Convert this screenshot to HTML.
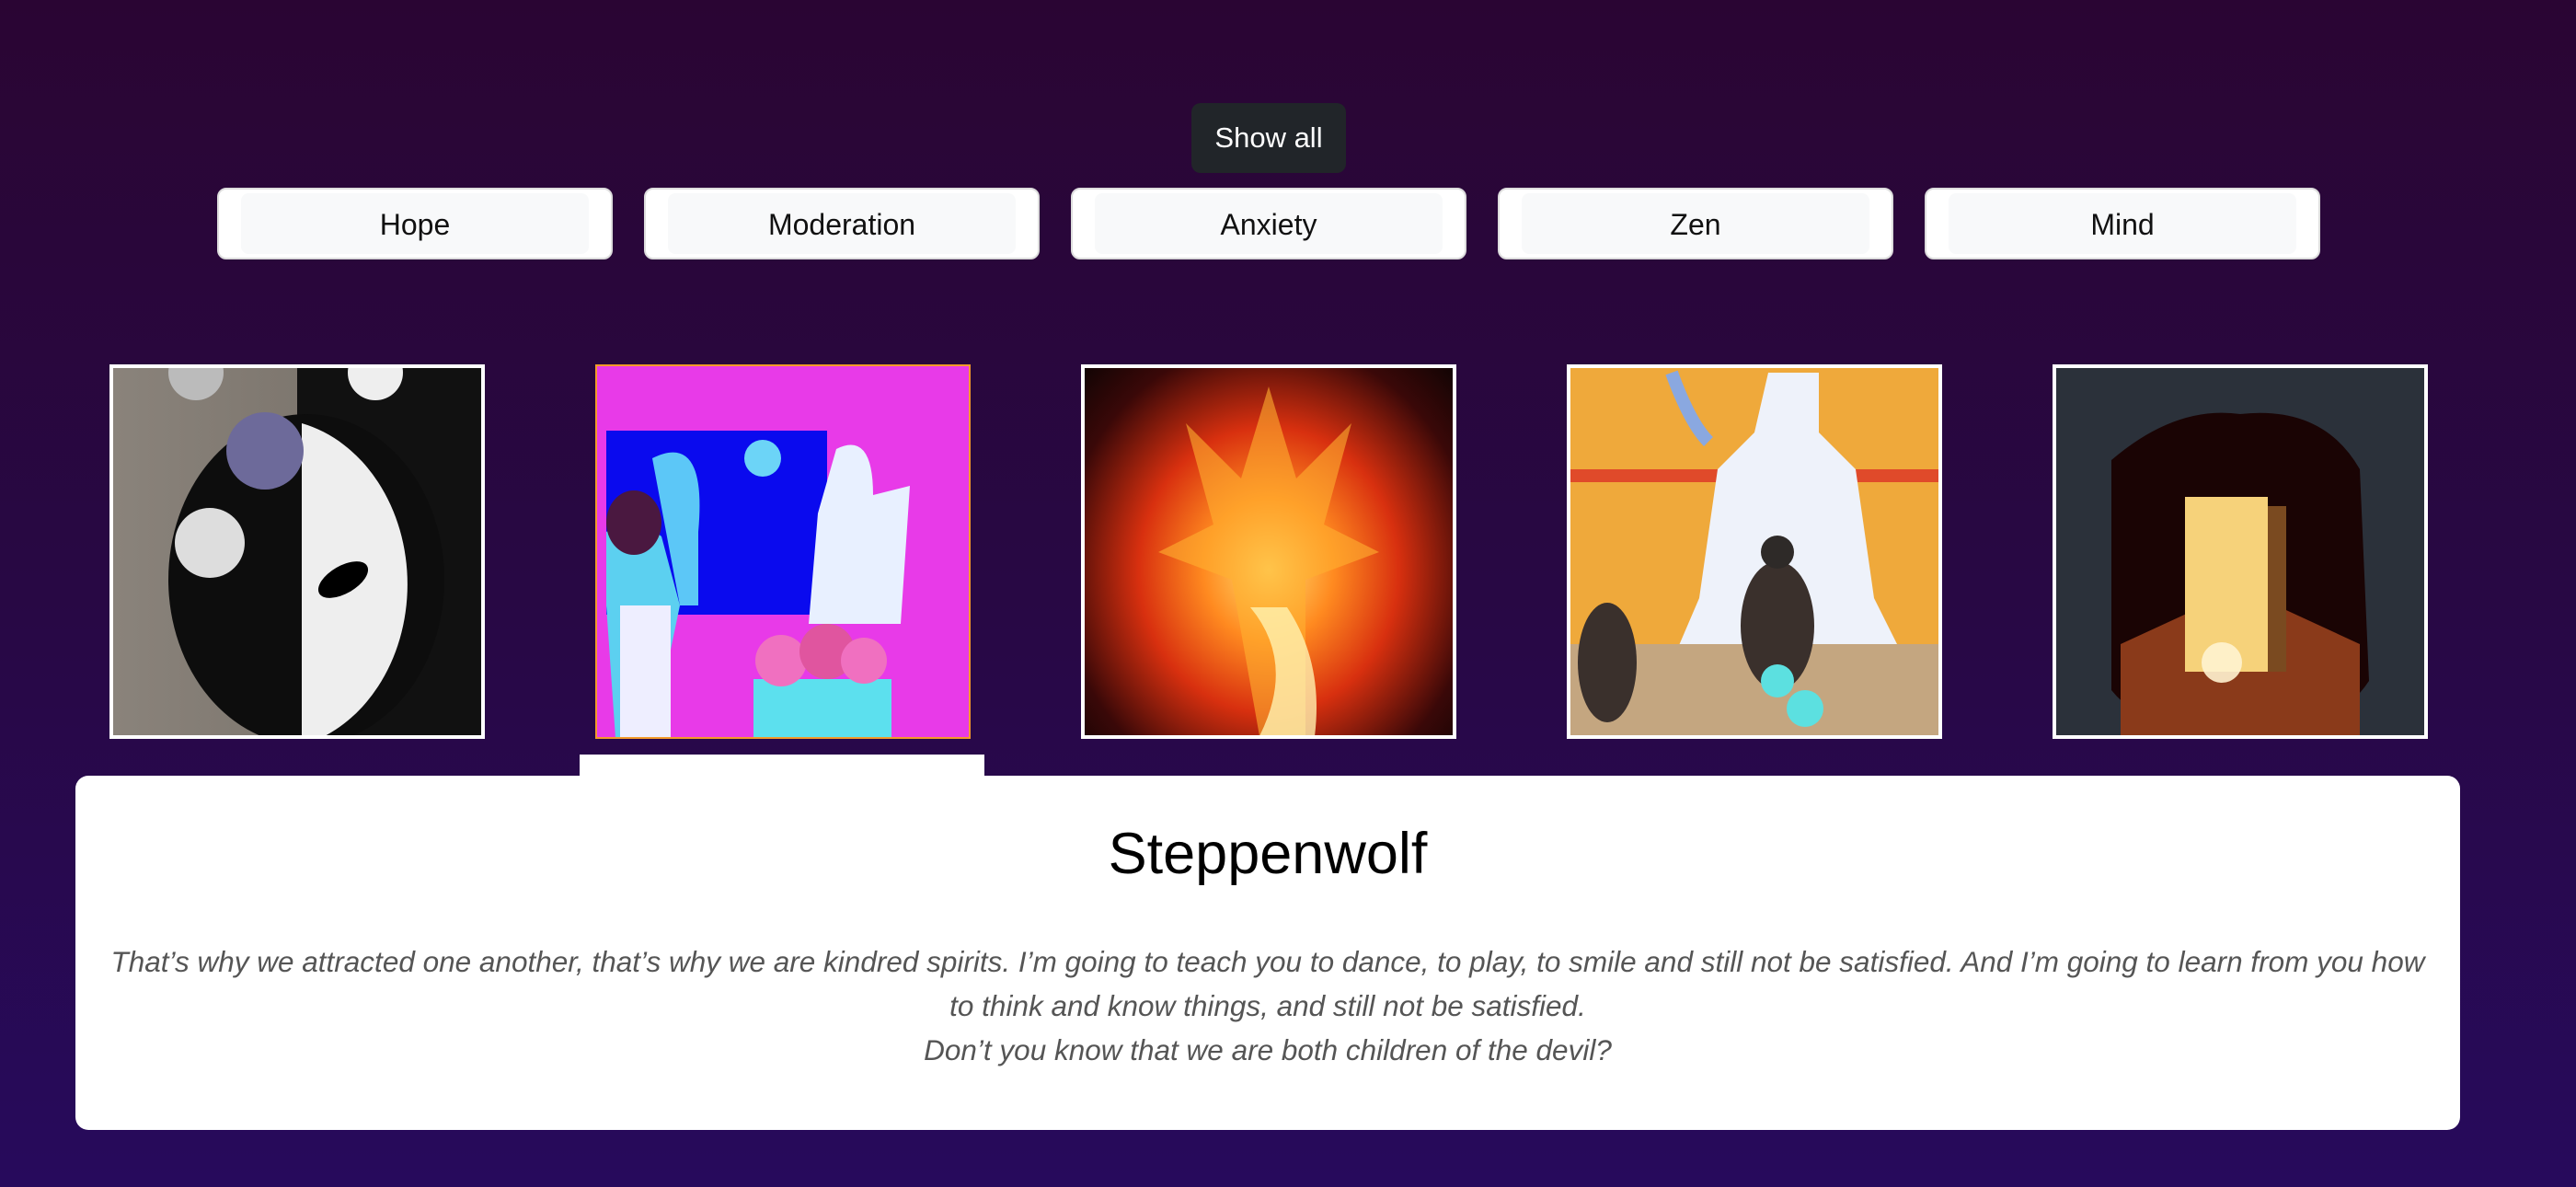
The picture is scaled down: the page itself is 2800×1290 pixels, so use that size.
<!DOCTYPE html>
<html><head><meta charset="utf-8"><style>
*{margin:0;padding:0;box-sizing:border-box}
html,body{width:2800px;height:1290px;overflow:hidden}
body{background:linear-gradient(180deg,#2a0533 0%,#280844 50%,#270a5c 100%);font-family:"Liberation Sans",sans-serif;position:relative}
.showall{position:absolute;left:1295px;top:112px;width:168px;height:76px;background:#212529;border-radius:10px;color:#fff;font-size:31px;display:flex;align-items:center;justify-content:center}
.cat{position:absolute;top:204px;width:430px;height:78px;background:#fff;border-radius:10px;border:2px solid #ddd}
.cat i{position:absolute;left:24px;right:24px;top:4px;bottom:4px;background:#f8f9fa;border-radius:8px}
.cat span{position:absolute;inset:0;display:flex;align-items:center;justify-content:center;font-size:32px;color:#111;padding-top:2px}
.img{position:absolute;top:396px;width:408px;height:407px;border:4px solid #fff;overflow:hidden}
.tab{position:absolute;left:630px;top:820px;width:440px;height:30px;background:#fff}
.card{position:absolute;left:82px;top:843px;width:2592px;height:385px;background:#fff;border-radius:14px;text-align:center}
.card h1{font-weight:normal;font-size:63px;color:#000;margin-top:50px;line-height:70px}
.card p{font-style:italic;color:#555;font-size:31.5px;line-height:48px;margin:58px 0 0;white-space:nowrap}
</style></head><body>
<div class="showall">Show all</div>
<div class="cat" style="left:236px"><i></i><span>Hope</span></div>
<div class="cat" style="left:700px"><i></i><span>Moderation</span></div>
<div class="cat" style="left:1164px"><i></i><span>Anxiety</span></div>
<div class="cat" style="left:1628px"><i></i><span>Zen</span></div>
<div class="cat" style="left:2092px"><i></i><span>Mind</span></div>

<div class="img" style="left:119px;background:linear-gradient(90deg,#8a837b 0%,#7e776f 50%,#111 50%)">
<svg width="400" height="400" viewBox="0 0 400 400"><ellipse cx="210" cy="230" rx="150" ry="180" fill="#0d0d0d"/><path d="M205 60 A150 180 0 0 1 205 410 Z" fill="#eee"/><ellipse cx="250" cy="230" rx="30" ry="15" fill="#000" transform="rotate(-30 250 230)"/><circle cx="165" cy="90" r="42" fill="#6d6a9a"/><circle cx="105" cy="190" r="38" fill="#ddd"/><circle cx="90" cy="5" r="30" fill="#bbb"/><circle cx="285" cy="5" r="30" fill="#eee"/></svg></div>

<div class="img" style="left:647px;border-color:#f39a2a;border-width:2px;background:#e83ae8">
<svg width="404" height="404" viewBox="0 0 404 404"><rect x="10" y="70" width="240" height="200" fill="#0a0aee"/><path d="M60 100 Q120 70 110 180 L110 260 L90 260 Z" fill="#5cc7f7"/><circle cx="180" cy="100" r="20" fill="#6cd4f7"/><path d="M260 90 Q300 70 300 140 L340 130 L330 280 L230 280 L240 160 Z" fill="#e8f0ff"/><rect x="170" y="340" width="150" height="64" fill="#5ce0ee"/><circle cx="200" cy="320" r="28" fill="#f070c0"/><circle cx="250" cy="310" r="30" fill="#e0559f"/><circle cx="290" cy="320" r="25" fill="#f070c0"/><path d="M10 180 Q40 160 70 185 L90 260 L60 404 L20 404 L10 260 Z" fill="#5cd0f0"/><rect x="25" y="260" width="55" height="144" fill="#eef"/><ellipse cx="40" cy="170" rx="30" ry="35" fill="#4a1840"/></svg></div>

<div class="img" style="left:1175px;background:radial-gradient(ellipse at 50% 55%,#ffe070 0%,#ff8a20 25%,#d8300f 50%,#3a0808 80%,#120404 100%)">
<svg width="400" height="400" viewBox="0 0 400 400"><path d="M200 20 L170 120 L110 60 L140 170 L80 200 L160 230 L190 400 L240 400 L240 230 L320 200 L260 170 L290 60 L230 120 Z" fill="#ffb030" opacity=".6"/><path d="M180 260 Q230 320 190 400 L250 400 Q260 320 220 260 Z" fill="#fff2b0" opacity=".8"/></svg></div>

<div class="img" style="left:1703px;background:#efa93b">
<svg width="400" height="400" viewBox="0 0 400 400"><rect y="110" width="400" height="14" fill="#e04a2a"/><path d="M215 5 L270 5 L270 70 L310 110 L330 250 L360 310 L110 320 L140 250 L160 110 L200 70 Z" fill="#eef2fa"/><rect y="300" width="400" height="100" fill="#c4a680"/><ellipse cx="225" cy="280" rx="40" ry="70" fill="#3a302c"/><circle cx="225" cy="200" r="18" fill="#2e2a28"/><ellipse cx="40" cy="320" rx="32" ry="65" fill="#3a302c"/><circle cx="225" cy="340" r="18" fill="#5ce0e0"/><circle cx="255" cy="370" r="20" fill="#5ce0e0"/><path d="M110 5 Q130 60 150 80" stroke="#8aa8e0" stroke-width="14" fill="none"/></svg></div>

<div class="img" style="left:2231px;background:#2b313a">
<svg width="400" height="400" viewBox="0 0 400 400"><path d="M60 100 Q130 40 200 50 Q290 40 330 110 L340 340 Q300 400 200 400 Q100 400 60 350 Z" fill="#1a0404"/><path d="M70 300 L200 240 L330 300 L330 400 L70 400 Z" fill="#8a3a1a"/><rect x="140" y="140" width="90" height="190" fill="#f6d27a"/><rect x="230" y="150" width="20" height="180" fill="#7a4a20"/><circle cx="180" cy="320" r="22" fill="#fff3d0" opacity=".9"/></svg></div>

<div class="tab"></div>
<div class="card">
<h1>Steppenwolf</h1>
<p>That’s why we attracted one another, that’s why we are kindred spirits. I’m going to teach you to dance, to play, to smile and still not be satisfied. And I’m going to learn from you how<br>to think and know things, and still not be satisfied.<br>Don’t you know that we are both children of the devil?</p>
</div>
</body></html>
